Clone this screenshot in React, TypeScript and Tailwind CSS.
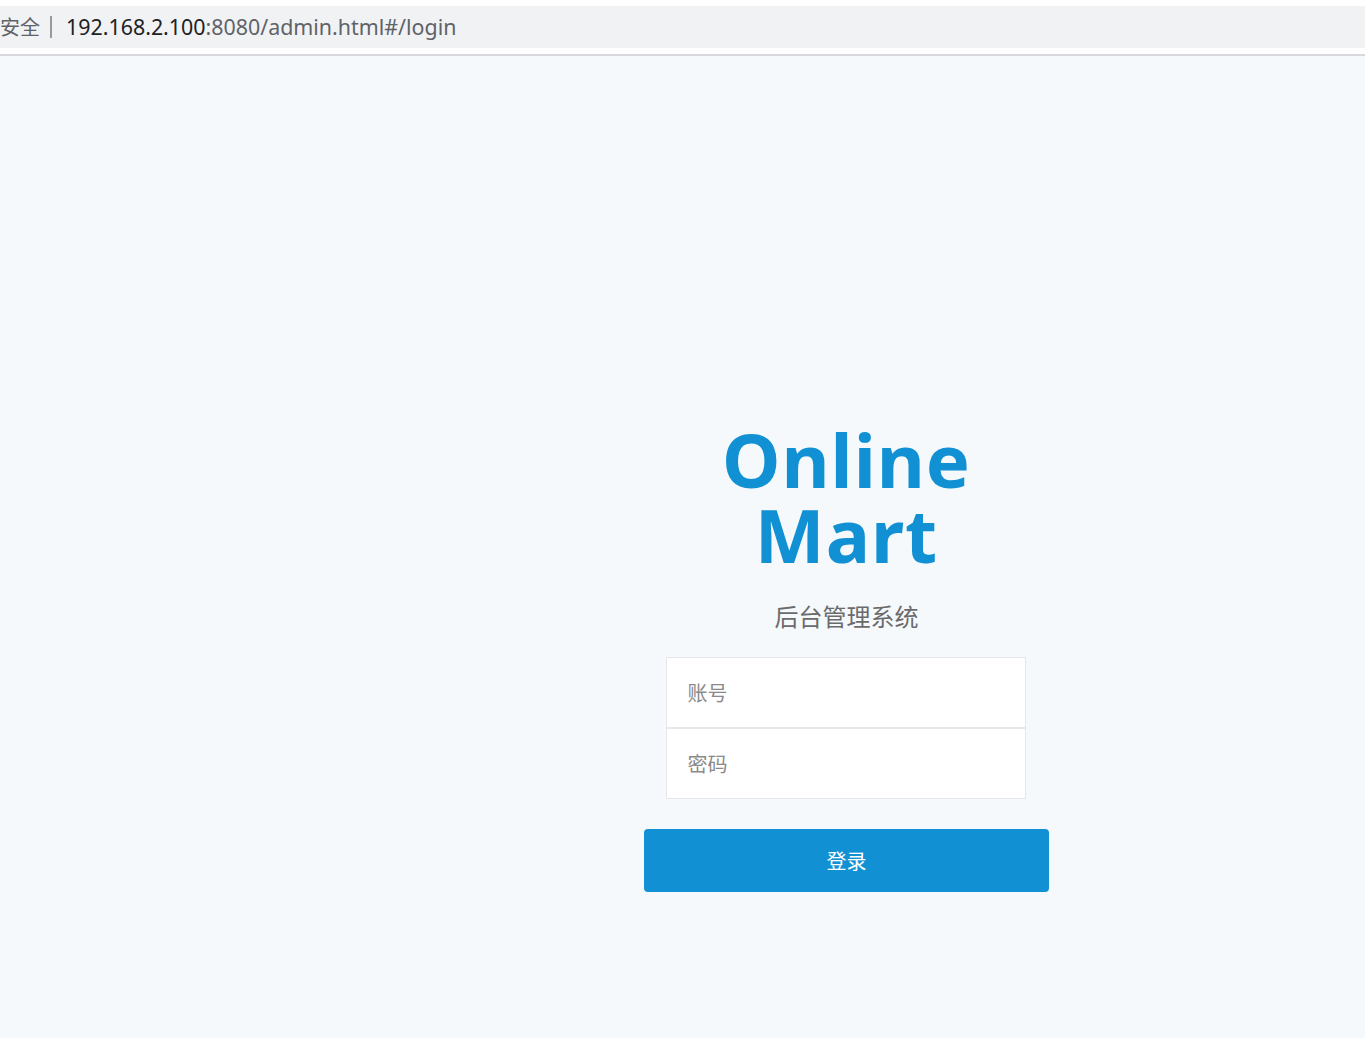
import React from 'react';

const ui = { fontFamily: '"Noto Sans", "Noto Sans CJK SC", sans-serif' };
const cjk = { fontFamily: '"Noto Sans CJK SC", "Noto Sans", sans-serif' };

// Browser address bar strip at the top of the screenshot
function AddressBar() {
  return (
    <div className="bg-white pt-[6px]">
      <div className="flex h-[42px] items-center bg-[#f1f2f4] text-[21.4px]" style={ui}>
        <span className="text-[20px] text-[#5f6368]" style={cjk}>
          安全
        </span>
        <span className="ml-[10px] mr-[8px] h-[22px] w-[2px] bg-[#9a9a9a]" />
        <span className="ml-[6px] text-[#202124]">192.168.2.100</span>
        <span className="text-[#5f6368]">:8080/admin.html#/login</span>
      </div>
      <div className="h-[6px] bg-white" />
      <div className="h-[2px] bg-[#d9d8dc]" />
    </div>
  );
}

export default function App() {
  return (
    <div className="flex min-h-[1038px] flex-col bg-[#f5f9fc]">
      <AddressBar />

      <div className="flex justify-center pl-[328px] pt-[366px]">
        <div className="flex w-[405px] flex-col items-center">
          <h1
            className="flex flex-col items-center text-[74px] font-bold leading-[75px] tracking-[1px] text-[#1191d3]"
            style={ui}
          >
            <span>Online</span>
            <span>Mart</span>
          </h1>
          <p className="mt-[28px] text-[24px] leading-[32px] text-[#6b6b6b]" style={cjk}>
            后台管理系统
          </p>

          {/* Login form */}
          <div className="ml-[-2px] mt-[25px] w-[360px] border border-[#e6e7eb] bg-white" style={cjk}>
            <input
              placeholder="账号"
              className="block h-[69px] w-full px-[21px] text-[20px] text-[#333] outline-none placeholder:text-[#8a8a8a]"
            />
            <div className="h-[2px] bg-[#e6e7eb]" />
            <input
              type="password"
              placeholder="密码"
              className="block h-[69px] w-full px-[21px] text-[20px] text-[#333] outline-none placeholder:text-[#8a8a8a]"
            />
          </div>

          <button
            className="mt-[30px] h-[63px] w-[405px] rounded-[4px] bg-[#1191d3] text-[20px] text-white"
            style={cjk}
          >
            登录
          </button>
        </div>
      </div>
    </div>
  );
}
